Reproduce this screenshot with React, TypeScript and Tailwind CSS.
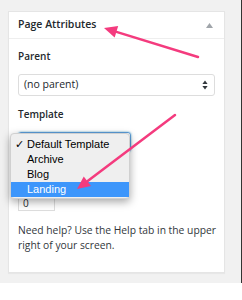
import { useState } from "react";

const sans = "font-['Open_Sans',sans-serif]";

function UpDown() {
  return (
    <svg width="6" height="10" viewBox="0 0 6 10" className="text-[#32373c]">
      <path d="M3 0.5 L5.6 4 H0.4 Z" fill="currentColor" />
      <path d="M3 9.5 L5.6 6 H0.4 Z" fill="currentColor" />
    </svg>
  );
}

function Arrow({ x1, y1, x2, y2 }: { x1: number; y1: number; x2: number; y2: number }) {
  const a = Math.atan2(y2 - y1, x2 - x1);
  const len = 13;
  const w = 6;
  const bx = x2 - Math.cos(a) * len;
  const by = y2 - Math.sin(a) * len;
  const px = -Math.sin(a) * w;
  const py = Math.cos(a) * w;
  return (
    <g>
      <line x1={x1} y1={y1} x2={bx} y2={by} stroke="#f43b7e" strokeWidth="2.5" strokeLinecap="round" />
      <polygon points={`${x2},${y2} ${bx + px},${by + py} ${bx - px},${by - py}`} fill="#f43b7e" />
    </g>
  );
}

export default function App() {
  const [template] = useState("Default Template");
  const options = ["Default Template", "Archive", "Blog", "Landing"];

  return (
    <div className="relative w-[242px] h-[300px] bg-white overflow-hidden">
      <div className="h-[283px] w-[242px] bg-[#f1f1f1] border-r border-[#333] pt-[11px] pl-[8px]">
        <div className={`relative w-[217px] h-[262px] bg-white border border-[#e5e5e5] shadow-[0_1px_1px_rgba(0,0,0,0.04)] ${sans} text-[#23282d]`}>
          <div className="h-[27px] border-b border-[#eee] flex items-center justify-between pl-[9px] pr-[11px]">
            <span className="text-[10.5px] font-semibold">Page Attributes</span>
            <svg width="7" height="5" viewBox="0 0 7 5">
              <path d="M3.5 0 L7 5 H0 Z" fill="#a0a5aa" />
            </svg>
          </div>

          <div className="px-[9px] pt-[10px]">
            <div className="text-[10px] font-semibold leading-[14px]">Parent</div>
            <div className="mt-[11px] h-[22px] w-[197px] border border-[#ddd] rounded-[3px] flex items-center justify-between pl-[5px] pr-[6px] text-[10.5px]">
              <span>(no parent)</span>
              <UpDown />
            </div>

            <div className="mt-[11px] text-[10px] font-semibold leading-[14px]">Template</div>
            {/* focused select, its text is covered by the open list */}
            <div className="mt-[11px] h-[20px] w-[113px] border border-[#5b9dd9] rounded-[3px] shadow-[0_0_2px_rgba(30,140,190,0.8)]" />

            <div className="mt-[43px] h-[16px] w-[37px] border border-[#ddd] flex items-center pl-[4px] text-[10px]">0</div>

            <p className="mt-[12px] w-[202px] text-[10.3px] leading-[15px] text-[#32373c]">
              Need help? Use the Help tab in the upper right of your screen.
            </p>
          </div>

          <div className="absolute left-[1px] top-[121px] w-[120px] h-[66px] bg-[#efefef] rounded-[4px] shadow-[0_3px_8px_rgba(0,0,0,0.35)] border border-[#d0d0d0] pt-[3px] font-['Liberation_Sans',Arial,sans-serif] text-[11px] text-black">
            {options.map((o) => (
              <div
                key={o}
                className={`h-[15px] flex items-center ${o === "Landing" ? "bg-[#3d96fb] text-white" : ""}`}
              >
                <span className="w-[16px] pl-[4px] text-[11px]">{o === template ? "✓" : ""}</span>
                <span>{o}</span>
              </div>
            ))}
          </div>
        </div>
      </div>

      <svg className="absolute inset-0 pointer-events-none" width="242" height="300">
        <Arrow x1={198} y1={57} x2={104} y2={28} />
        <Arrow x1={175} y1={115} x2={77} y2={189} />
      </svg>
    </div>
  );
}
